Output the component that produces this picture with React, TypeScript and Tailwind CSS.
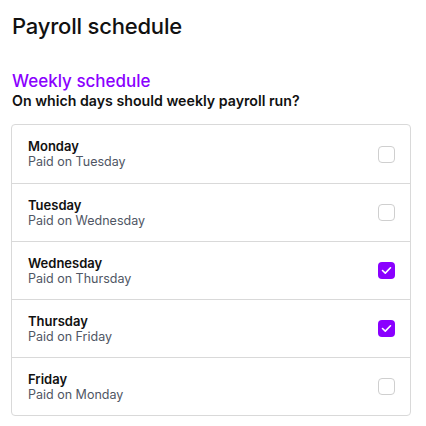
import { useState } from 'react';

const days = [
  { day: 'Monday', paid: 'Tuesday' },
  { day: 'Tuesday', paid: 'Wednesday' },
  { day: 'Wednesday', paid: 'Thursday' },
  { day: 'Thursday', paid: 'Friday' },
  { day: 'Friday', paid: 'Monday' },
];

export default function App() {
  const [checked, setChecked] = useState<Record<string, boolean>>({
    Wednesday: true,
    Thursday: true,
  });

  return (
    <div className="w-[426px] h-[426px] bg-white px-[11px] pt-[11px] font-['Inter',sans-serif] text-[#111]">
      <h1 className="text-[22px] font-medium leading-[30px] pl-[1px] tracking-[-0.2px]">Payroll schedule</h1>
      <h2 className="mt-[29px] text-[17px] font-medium leading-[22px] text-[#8a00ff] pl-[1px]">Weekly schedule</h2>
      <p className="text-[14.2px] font-semibold leading-[18px] pl-[1px]">On which days should weekly payroll run?</p>
      <div className="mt-[14px] w-[400px] border border-[#d9d9d9] rounded-[4px]">
        {days.map((d, i) => (
          <div
            key={d.day}
            className={`h-[58px] flex items-center justify-between pl-[16px] pr-[15px] ${i > 0 ? 'border-t border-[#d9d9d9]' : ''}`}
          >
            <div className="flex flex-col">
              <span className="text-[13px] font-semibold leading-[16px]">{d.day}</span>
              <span className="text-[12.5px] leading-[16px] text-[#4f5664]">Paid on {d.paid}</span>
            </div>
            <button
              onClick={() => setChecked({ ...checked, [d.day]: !checked[d.day] })}
              className={`w-[17px] h-[17px] rounded-[4px] flex items-center justify-center ${
                checked[d.day] ? 'bg-[#8a00ff]' : 'border border-[#cfcfcf] bg-white'
              }`}
            >
              {checked[d.day] && (
                <svg width="11" height="9" viewBox="0 0 11 9" fill="none">
                  <path d="M1.5 4.5l2.8 2.6L9.5 1.8" stroke="white" strokeWidth="1.6" strokeLinecap="round" strokeLinejoin="round" />
                </svg>
              )}
            </button>
          </div>
        ))}
      </div>
    </div>
  );
}
